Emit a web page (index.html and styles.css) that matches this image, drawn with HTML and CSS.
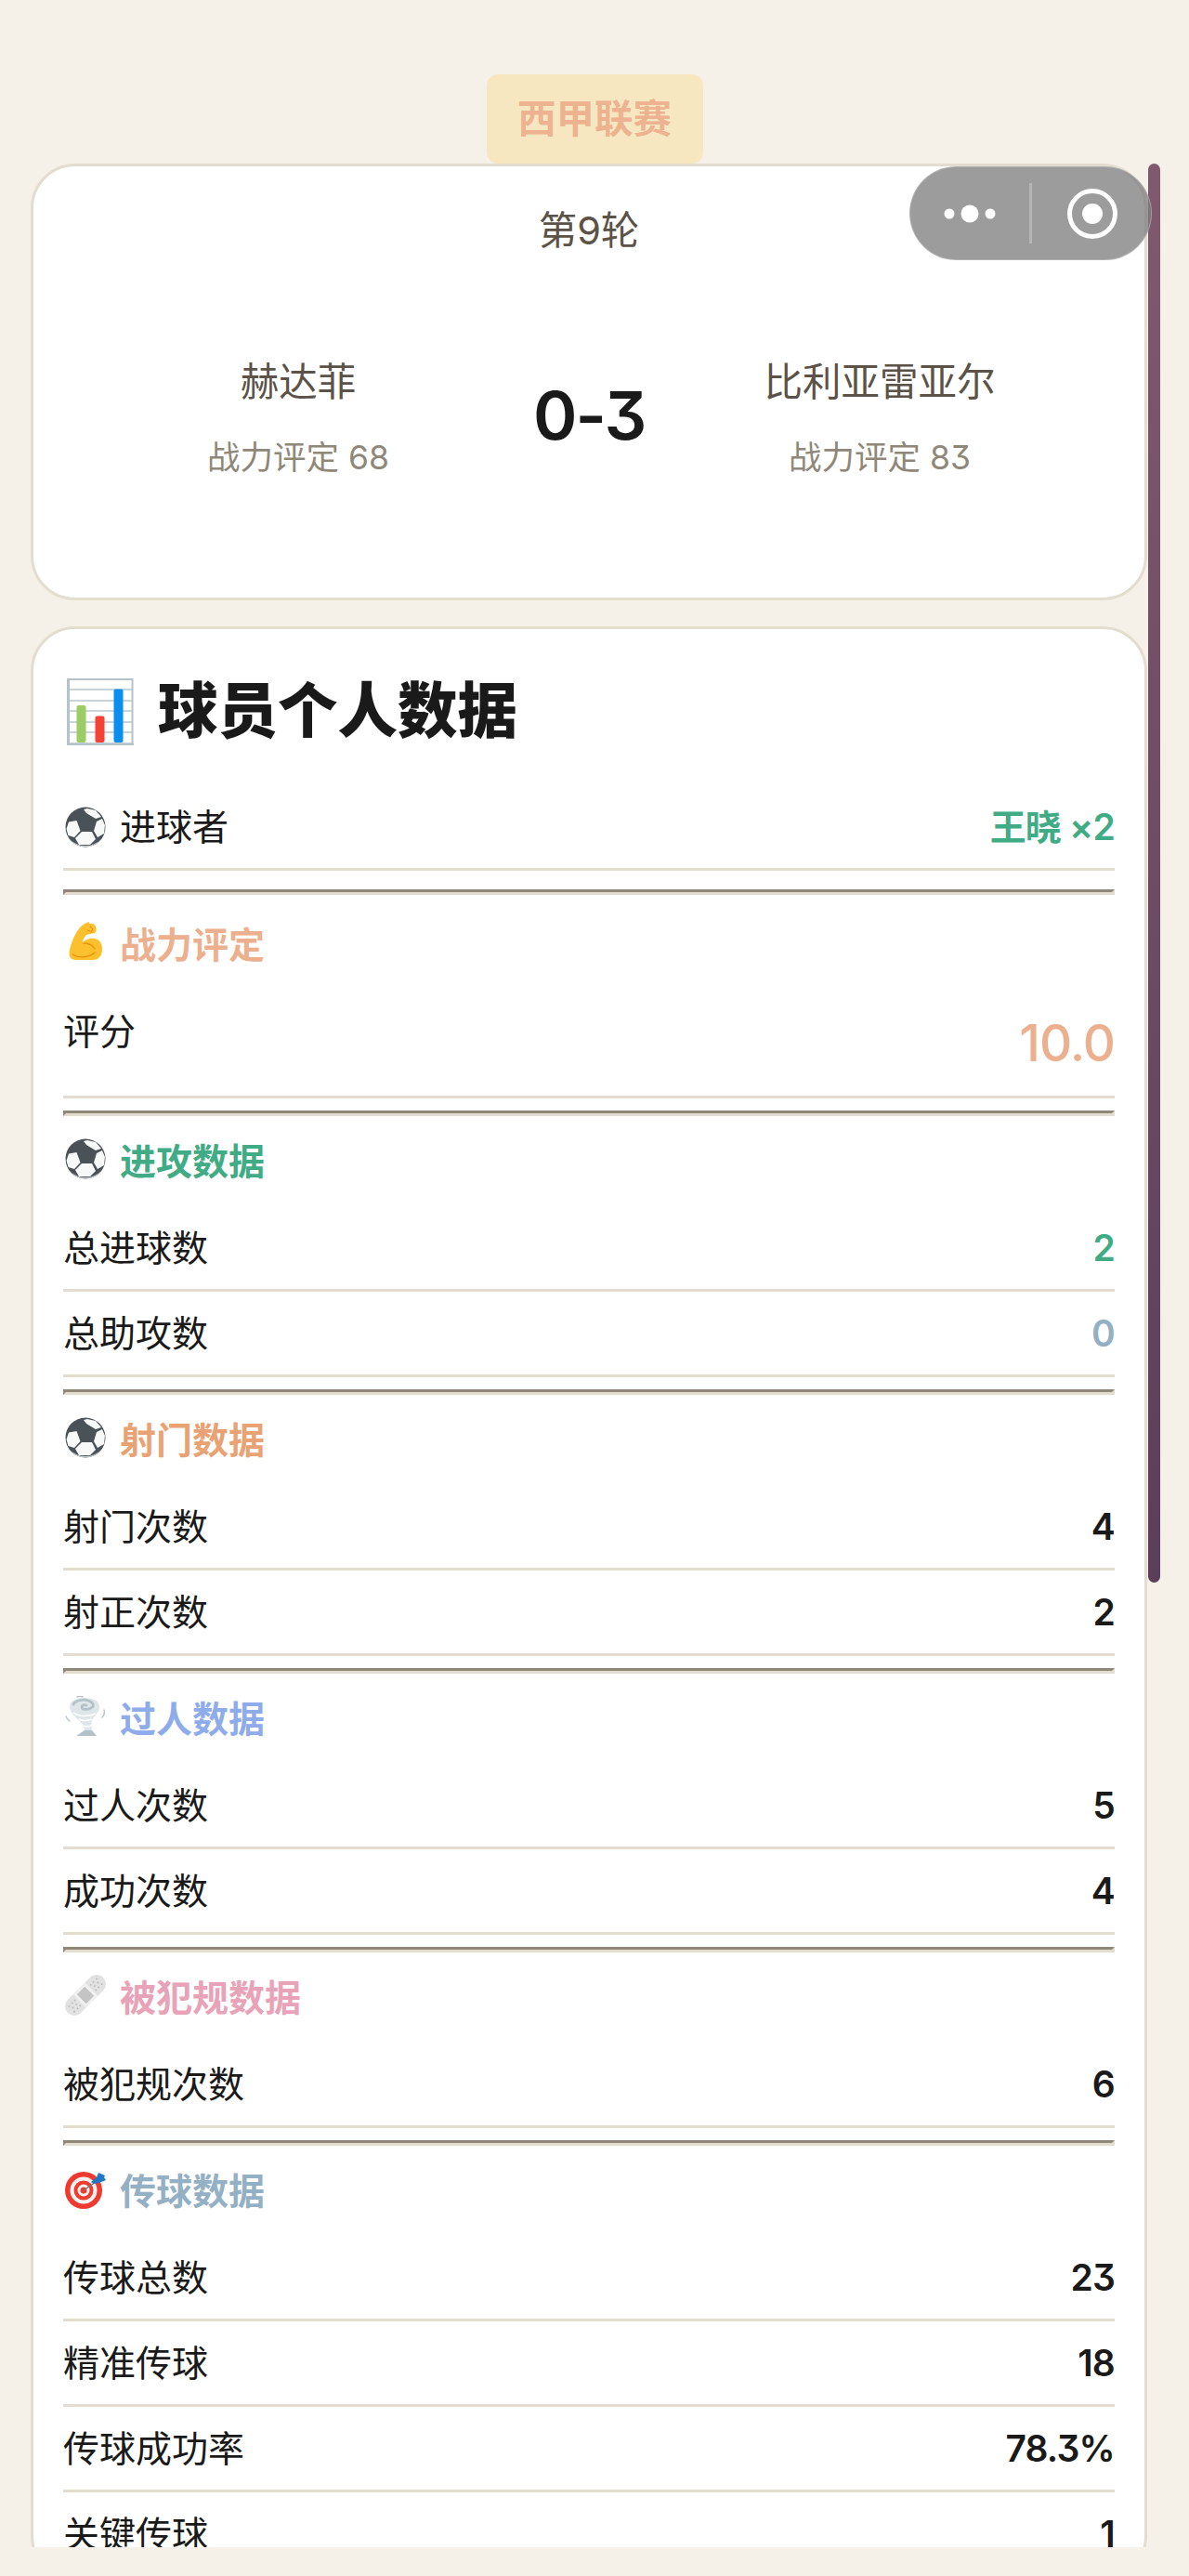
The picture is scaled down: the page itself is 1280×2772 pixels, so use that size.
FILE: index.html
```html
<!DOCTYPE html>
<html lang="zh-CN">
<head>
<meta charset="utf-8">
<title>比赛详情</title>
<link rel="stylesheet" href="styles.css">
</head>
<body>
<svg class="defs" width="0" height="0" aria-hidden="true">
  <defs>
    <symbol id="ball" viewBox="0 0 44 44">
      <circle cx="22" cy="22" r="21.5" fill="#4a5257"/>
      <g fill="#f7f8f8">
        <path d="M12.5 15l4 11-6.500 7-6.500-2-2-7 2.500-7.500z"/>
        <path d="M18 27h11l4 8-6 6H15l-4-7z"/>
        <path d="M34 16l6-3 3 7-1 9-7 4-4-7z"/>
        <path d="M23 7l10 6 6-2-6-7-9-2-4 1 3 4z"/>
      </g>
      <path d="M5 35a21.500 21.500 0 0 0 34 0 24 24 0 0 1-34 0z" fill="#c9ced1"/>
    </symbol>
  </defs>
</svg>
<main class="page">
  <div class="league">西甲联赛</div>

  <section class="card match">
    <div class="round">第9轮</div>
    <div class="teams">
      <div class="team">
        <div class="team-name">赫达菲</div>
        <div class="team-rating">战力评定 68</div>
      </div>
      <div class="score">0-3</div>
      <div class="team">
        <div class="team-name">比利亚雷亚尔</div>
        <div class="team-rating">战力评定 83</div>
      </div>
    </div>
  </section>

  <section class="card stats">
    <h1 class="title">
      <svg class="title-icon" viewBox="0 0 72 72" aria-hidden="true">
        <rect x="0" y="0" width="72" height="72" fill="#fff"/>
        <path d="M2 12h68M2 24h68M2 35h68M2 47h68M2 58h68" stroke="#b8c6cd" stroke-width="1.6"/>
        <rect x="1.500" y="1" width="69" height="69.500" fill="none" stroke="#b4c2ca" stroke-width="2"/>
        <rect x="0" y="0" width="3" height="72" fill="#b4c2ca"/>
        <rect x="0" y="69.500" width="72" height="2.500" fill="#b4c2ca"/>
        <rect x="10.500" y="29" width="10" height="40" rx="2" fill="#9ccc65"/>
        <rect x="30.500" y="40.500" width="10" height="28.500" rx="2" fill="#f44336"/>
        <rect x="50.500" y="11.500" width="10" height="57.500" rx="2" fill="#0a8ff0"/>
      </svg>
      <span>球员个人数据</span>
    </h1>

    <div class="row row-goal">
      <span class="label">
        <svg class="icon"><use href="#ball"/></svg>进球者
      </span>
      <span class="value green">王晓 ×2</span>
    </div>
    <hr class="rule rule-goal">

    <h2 class="heading heading-rating peach">
      <svg class="icon" viewBox="0 0 44 44" aria-hidden="true">
        <path d="M26 2c3-1 6 0 7 3 1 2 1 5-1 7-3 1-7 1-9 2-2 2-4 5-4 8 3-3 8-5 13-4 5 1 8 5 8 11 0 4-1 8-4 10-2 2-5 2-9 2H12c-3 0-6-1-7-4-1-3 0-7 1-11 2-7 5-14 10-20 3-3 6-5 10-6z" fill="#fcc02e"/>
        <path d="M8 35c6 4 18 4 24-2M20 23c4 0 9 1 12 6" fill="none" stroke="#e8930c" stroke-width="1.3" stroke-linecap="round"/>
        <path d="M27 5l3 3-2 3M24 9l3 1" fill="none" stroke="#e8930c" stroke-width="1.100" stroke-linecap="round"/>
      </svg>战力评定
    </h2>
    <div class="row row-rating">
      <span class="label">评分</span>
      <span class="value value-big peach">10.0</span>
    </div>
    <hr class="rule">

    <h2 class="heading green">
      <svg class="icon"><use href="#ball"/></svg>进攻数据
    </h2>
    <div class="row"><span class="label">总进球数</span><span class="value green">2</span></div>
    <div class="row"><span class="label">总助攻数</span><span class="value slate">0</span></div>
    <hr class="rule">

    <h2 class="heading orange">
      <svg class="icon"><use href="#ball"/></svg>射门数据
    </h2>
    <div class="row"><span class="label">射门次数</span><span class="value">4</span></div>
    <div class="row"><span class="label">射正次数</span><span class="value">2</span></div>
    <hr class="rule">

    <h2 class="heading blue">
      <svg class="icon" viewBox="0 0 44 44" aria-hidden="true">
        <path d="M5 11c0-6 8-9 16-9s16 3 16 9c0 6-5 10-8 15-1 4-1 8 0 12h-8c0-5-2-8-5-11-4-3-11-9-11-16z" fill="#dfe6e9"/>
        <path d="M9 18c5 4 15 5 24 1M15 25c4 2 9 2 14 0M20 32c2 1 5 1 8 0" fill="none" stroke="#fff" stroke-width="1.600"/>
        <path d="M9 9c2-4 10-6 16-4 6 2 7 6 3 8-4 2-10 2-10-1 0-2 3-3 5-2" fill="none" stroke="#b3c2c9" stroke-width="2.800" stroke-linecap="round"/>
        <path d="M13 1c2-1 4-1 6 0M1 22c1 2 2 4 4 5M42 15c1 3 0 6-2 8" fill="none" stroke="#b8c6cc" stroke-width="1.500" stroke-linecap="round"/>
        <path d="M21 37h8l5 6H12z" fill="#b3c2c9"/>
      </svg>过人数据
    </h2>
    <div class="row"><span class="label">过人次数</span><span class="value">5</span></div>
    <div class="row"><span class="label">成功次数</span><span class="value">4</span></div>
    <hr class="rule">

    <h2 class="heading pink">
      <svg class="icon" viewBox="0 0 44 44" aria-hidden="true">
        <g transform="rotate(-45 22 22)">
          <rect x="-5" y="12" width="54" height="20" rx="10" fill="#e2e2e2"/>
          <rect x="13" y="12" width="18" height="20" fill="#f1f1f1"/>
          <rect x="16" y="15" width="12" height="14" fill="#c4c4c4"/>
          <g fill="#bdbdbd">
            <circle cx="1" cy="18" r="1"/><circle cx="6" cy="18" r="1"/><circle cx="10" cy="18" r="1"/>
            <circle cx="1" cy="26" r="1"/><circle cx="6" cy="26" r="1"/><circle cx="10" cy="26" r="1"/>
            <circle cx="3" cy="22" r="1"/><circle cx="8" cy="22" r="1"/>
            <circle cx="34" cy="18" r="1"/><circle cx="38" cy="18" r="1"/><circle cx="43" cy="18" r="1"/>
            <circle cx="34" cy="26" r="1"/><circle cx="38" cy="26" r="1"/><circle cx="43" cy="26" r="1"/>
            <circle cx="36" cy="22" r="1"/><circle cx="41" cy="22" r="1"/>
          </g>
        </g>
      </svg>被犯规数据
    </h2>
    <div class="row"><span class="label">被犯规次数</span><span class="value">6</span></div>
    <hr class="rule">

    <h2 class="heading slate">
      <svg class="icon" viewBox="0 0 44 44" aria-hidden="true">
        <circle cx="20" cy="24" r="20" fill="#ee3a2f"/>
        <circle cx="20" cy="24" r="14.500" fill="#f8f3f0"/>
        <circle cx="20" cy="24" r="10.500" fill="#ee3a2f"/>
        <circle cx="20" cy="24" r="6.500" fill="#f8f3f0"/>
        <circle cx="20" cy="24" r="3.500" fill="#ee3a2f"/>
        <path d="M20 24L36 13" stroke="#6f7a80" stroke-width="1.400"/>
        <path d="M28 15l6-5 2-5 7 3-1 2 2 3-5 2-3 1-5 1z" fill="#1f78c4"/>
      </svg>传球数据
    </h2>
    <div class="row"><span class="label">传球总数</span><span class="value">23</span></div>
    <div class="row"><span class="label">精准传球</span><span class="value">18</span></div>
    <div class="row"><span class="label">传球成功率</span><span class="value">78.3%</span></div>
    <div class="row"><span class="label">关键传球</span><span class="value">1</span></div>
  </section>
</main>

<div class="scrollbar"></div>
<div class="capsule">
  <span class="capsule-side">
    <svg class="capsule-dots" viewBox="0 0 56 20" aria-hidden="true">
      <circle cx="6" cy="10" r="5.500" fill="#fff"/>
      <circle cx="28" cy="10" r="9.500" fill="#fff"/>
      <circle cx="50" cy="10" r="5.500" fill="#fff"/>
    </svg>
  </span>
  <span class="capsule-line"></span>
  <span class="capsule-side">
    <svg class="capsule-ring" viewBox="0 0 54 54" aria-hidden="true">
      <circle cx="27" cy="27" r="24.500" fill="none" stroke="#fff" stroke-width="5"/>
      <circle cx="27" cy="27" r="11" fill="#fff"/>
    </svg>
  </span>
</div>
</body>
</html>
```

FILE: styles.css
```css
* { box-sizing: border-box; }

html, body {
  margin: 0;
  background: #f5f0e8;
}

body {
  position: relative;
  height: 2772px;
  overflow: hidden;
  color: #1a1a1a;
  font-family: Inter, "Noto Sans CJK SC", sans-serif;
  font-feature-settings: "cv09" 1;
}

.defs { position: absolute; }

.page {
  height: 2741px;
  padding-top: 80px;
  overflow: hidden;
}

.league {
  width: 233px;
  height: 96px;
  margin: 0 auto;
  border-radius: 12px;
  background: #f7e7c1;
  color: #edb290;
  font-size: 41.5px;
  font-weight: 600;
  line-height: 96px;
  text-align: center;
}

.card {
  margin: 0 45px 28px 33px;
  border: 3px solid #e3ddd0;
  border-radius: 48px;
  background: #fff;
}

.match {
  height: 470px;
  padding: 41px 32px 0;
}

.round {
  color: #5b5248;
  font-size: 41.5px;
  line-height: 56px;
  text-align: center;
}

.teams {
  display: flex;
  align-items: center;
  margin-top: 105px;
}

.team {
  flex: 1;
  text-align: center;
}

.team-name {
  color: #5b5248;
  font-size: 41.5px;
  line-height: 60px;
}

.team-rating {
  margin-top: 22px;
  color: #8f8878;
  font-size: 35.5px;
  line-height: 60px;
}

.score {
  width: 120px;
  margin-bottom: 10px;
  font-size: 72px;
  font-weight: 600;
  line-height: 96px;
  text-align: center;
  white-space: nowrap;
  letter-spacing: -2px;
}

.stats {
  padding: 36px 32px 0;
}

.title {
  display: flex;
  align-items: center;
  height: 102px;
  margin: 0 0 30px;
  font-size: 64.5px;
  font-weight: 900;
  line-height: 102px;
}

.title span { margin-top: 2px; }

.title-icon {
  width: 72px;
  height: 72px;
  margin: 3px 26px 0 4px;
}

.row {
  display: flex;
  justify-content: space-between;
  align-items: flex-start;
  height: 92px;
  border-bottom: 3px solid #e3ddd0;
  font-size: 39px;
  line-height: 90px;
}

.row-rating { height: 117px; }

.label {
  display: flex;
  align-items: center;
}

.value {
  font-weight: 600;
  letter-spacing: -0.8px;
}

.value-big {
  font-size: 54.6px;
  font-weight: 500;
  line-height: 114px;
  letter-spacing: -1px;
}

.rule {
  height: 6px;
  margin: 13px 0 0;
  border: 3px solid;
  border-color: #8f8878 #e3ddd0 #e3ddd0 #8f8878;
}

.rule-goal { margin-top: 20px; }

.heading {
  display: flex;
  align-items: center;
  height: 97px;
  margin: 0;
  padding-bottom: 5px;
  font-size: 39px;
  font-weight: 600;
}

.heading-rating { margin-top: 5px; }

.icon {
  flex: none;
  width: 44px;
  height: 44px;
  margin: 0 15px 0 2px;
}

.green { color: #41ab85; }
.peach { color: #ecb08f; }
.orange { color: #e9a273; }
.blue { color: #8facea; }
.pink { color: #e8a3b8; }
.slate { color: #94b0c4; }

.scrollbar {
  position: absolute;
  top: 176px;
  left: 1236px;
  width: 13px;
  height: 1527px;
  border-radius: 7px;
  background: linear-gradient(#80596e, #5b3e5a);
}

.capsule {
  position: absolute;
  top: 179px;
  left: 979px;
  display: flex;
  align-items: center;
  width: 261px;
  height: 101px;
  border: 1px solid rgba(200, 200, 200, 0.5);
  border-radius: 51px;
  background: rgba(125, 125, 125, 0.76);
}

.capsule-side {
  display: flex;
  flex: 1;
  justify-content: center;
}

.capsule-dots {
  width: 56px;
  height: 20px;
}

.capsule-ring {
  width: 54px;
  height: 54px;
  margin-left: 2px;
}

.capsule-line {
  width: 3px;
  height: 65px;
  background: rgba(255, 255, 255, 0.25);
}
```
